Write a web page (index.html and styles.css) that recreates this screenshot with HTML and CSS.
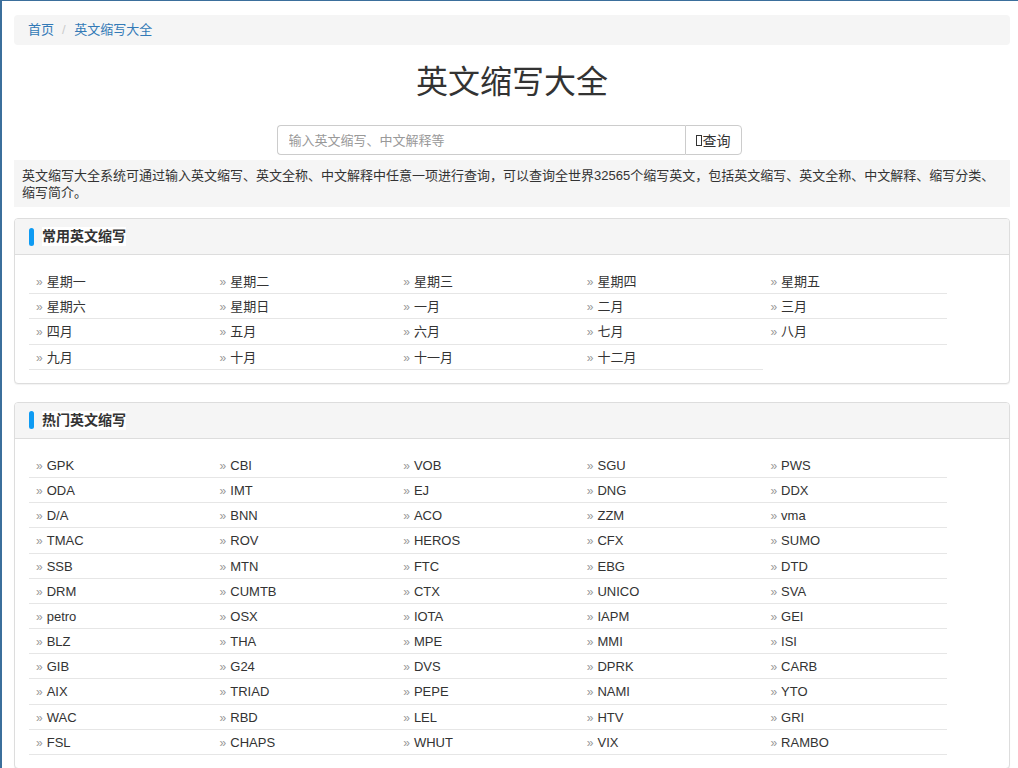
FILE: index.html
```html
<!DOCTYPE html>
<html lang="zh-CN">
<head>
<meta charset="utf-8">
<title>英文缩写大全</title>
<link rel="stylesheet" href="styles.css">
</head>
<body>
<div class="page">
  <ol class="breadcrumb">
    <li><a href="#">首页</a></li>
    <li><a href="#">英文缩写大全</a></li>
  </ol>
  <h1 class="title">英文缩写大全</h1>
  <form class="search">
    <input class="search-input" type="text" placeholder="输入英文缩写、中文解释等">
    <button class="search-btn" type="button"><span class="missing-glyph"></span>查询</button>
  </form>
  <div class="intro">英文缩写大全系统可通过输入英文缩写、英文全称、中文解释中任意一项进行查询，可以查询全世界32565个缩写英文，包括英文缩写、英文全称、中文解释、缩写分类、缩写简介。</div>

  <div class="panel">
    <div class="panel-heading"><span class="panel-title">常用英文缩写</span></div>
    <div class="panel-body">
      <ul class="list">
        <li><a href="#">星期一</a></li><li><a href="#">星期二</a></li><li><a href="#">星期三</a></li><li><a href="#">星期四</a></li><li><a href="#">星期五</a></li>
        <li><a href="#">星期六</a></li><li><a href="#">星期日</a></li><li><a href="#">一月</a></li><li><a href="#">二月</a></li><li><a href="#">三月</a></li>
        <li><a href="#">四月</a></li><li><a href="#">五月</a></li><li><a href="#">六月</a></li><li><a href="#">七月</a></li><li><a href="#">八月</a></li>
        <li><a href="#">九月</a></li><li><a href="#">十月</a></li><li><a href="#">十一月</a></li><li><a href="#">十二月</a></li>
      </ul>
    </div>
  </div>

  <div class="panel">
    <div class="panel-heading"><span class="panel-title">热门英文缩写</span></div>
    <div class="panel-body">
      <ul class="list list-en">
        <li><a href="#">GPK</a></li><li><a href="#">CBI</a></li><li><a href="#">VOB</a></li><li><a href="#">SGU</a></li><li><a href="#">PWS</a></li>
        <li><a href="#">ODA</a></li><li><a href="#">IMT</a></li><li><a href="#">EJ</a></li><li><a href="#">DNG</a></li><li><a href="#">DDX</a></li>
        <li><a href="#">D/A</a></li><li><a href="#">BNN</a></li><li><a href="#">ACO</a></li><li><a href="#">ZZM</a></li><li><a href="#">vma</a></li>
        <li><a href="#">TMAC</a></li><li><a href="#">ROV</a></li><li><a href="#">HEROS</a></li><li><a href="#">CFX</a></li><li><a href="#">SUMO</a></li>
        <li><a href="#">SSB</a></li><li><a href="#">MTN</a></li><li><a href="#">FTC</a></li><li><a href="#">EBG</a></li><li><a href="#">DTD</a></li>
        <li><a href="#">DRM</a></li><li><a href="#">CUMTB</a></li><li><a href="#">CTX</a></li><li><a href="#">UNICO</a></li><li><a href="#">SVA</a></li>
        <li><a href="#">petro</a></li><li><a href="#">OSX</a></li><li><a href="#">IOTA</a></li><li><a href="#">IAPM</a></li><li><a href="#">GEI</a></li>
        <li><a href="#">BLZ</a></li><li><a href="#">THA</a></li><li><a href="#">MPE</a></li><li><a href="#">MMI</a></li><li><a href="#">ISI</a></li>
        <li><a href="#">GIB</a></li><li><a href="#">G24</a></li><li><a href="#">DVS</a></li><li><a href="#">DPRK</a></li><li><a href="#">CARB</a></li>
        <li><a href="#">AIX</a></li><li><a href="#">TRIAD</a></li><li><a href="#">PEPE</a></li><li><a href="#">NAMI</a></li><li><a href="#">YTO</a></li>
        <li><a href="#">WAC</a></li><li><a href="#">RBD</a></li><li><a href="#">LEL</a></li><li><a href="#">HTV</a></li><li><a href="#">GRI</a></li>
        <li><a href="#">FSL</a></li><li><a href="#">CHAPS</a></li><li><a href="#">WHUT</a></li><li><a href="#">VIX</a></li><li><a href="#">RAMBO</a></li>
      </ul>
    </div>
  </div>
</div>
</body>
</html>
```

FILE: styles.css
```css
* { box-sizing: border-box; }

html, body {
  margin: 0;
  padding: 0;
}

body {
  font-family: "Liberation Sans", "Noto Sans CJK SC", sans-serif;
  font-size: 13px;
  color: #333;
  background: #fff;
  border-top: 1px solid #3b6f9c;
  border-left: 2px solid #3b6f9c;
  min-height: 100vh;
}

a { text-decoration: none; }

.page {
  width: 996px;
  margin-left: 12px;
  padding-top: 14px;
  padding-bottom: 20px;
}

/* breadcrumb */
.breadcrumb {
  list-style: none;
  margin: 0;
  padding: 0 14px;
  height: 30px;
  display: flex;
  align-items: center;
  background: #f5f5f5;
  border-radius: 4px;
  font-size: 13px;
  line-height: 18px;
}
.breadcrumb a { color: #337ab7; }
.breadcrumb li + li::before {
  content: "/\00a0";
  padding: 0 5px 0 8px;
  color: #ccc;
}

/* title */
.title {
  margin: 20px 0 25px;
  text-align: center;
  font-size: 32px;
  line-height: 35px;
  font-weight: normal;
  color: #333;
}

/* search */
.search {
  display: flex;
  justify-content: center;
  margin: 0;
  padding-right: 6px;
}
.search-input {
  width: 408px;
  height: 30px;
  margin: 0;
  padding: 0 11px;
  border: 1px solid #ccc;
  border-right: none;
  border-radius: 4px 0 0 4px;
  font-family: "Liberation Sans", "Noto Sans CJK SC", sans-serif;
  font-size: 13px;
  color: #555;
  outline: none;
}
.search-input::placeholder { color: #999; }
.search-btn {
  width: 57px;
  height: 30px;
  margin: 0;
  padding: 0;
  border: 1px solid #ccc;
  border-radius: 0 4px 4px 0;
  background: #fff;
  font-family: "Liberation Sans", "Noto Sans CJK SC", sans-serif;
  font-size: 14px;
  color: #333;
  display: flex;
  align-items: center;
  justify-content: center;
}
.missing-glyph {
  display: inline-block;
  width: 6px;
  height: 11px;
  border: 1px solid #333;
  margin-right: 1px;
}

/* intro */
.intro {
  margin-top: 5px;
  background: #f5f5f5;
  padding: 7px 8px 6px;
  font-size: 13px;
  line-height: 17px;
  color: #333;
}

/* panels */
.panel {
  margin-top: 11px;
  border: 1px solid #ddd;
  border-radius: 4px;
  background: #fff;
  box-shadow: 0 1px 1px rgba(0,0,0,0.05);
}
.panel + .panel { margin-top: 18px; }

.panel-heading {
  height: 36px;
  padding: 0 14px;
  background: #f5f5f5;
  border-bottom: 1px solid #ddd;
  border-radius: 3px 3px 0 0;
  display: flex;
  align-items: center;
}
.panel-heading::before {
  content: "";
  width: 5px;
  height: 18px;
  border-radius: 3px;
  background: #0e9bf3;
  margin-right: 8px;
}
.panel-title {
  background: #fff;
  font-size: 14px;
  font-weight: bold;
  line-height: 19px;
  color: #333;
}

.panel-body {
  padding: 14px 14px 13px;
}

.list {
  list-style: none;
  margin: 0;
  padding: 0;
  width: 918px;
  display: grid;
  grid-template-columns: repeat(5, 1fr);
}
.list li {
  height: 25.2px;
  line-height: 24px;
  padding-top: 1px;
  border-bottom: 1px solid #e6e6e6;
  padding-left: 7px;
  white-space: nowrap;
}
.list li::before {
  content: "»";
  color: #999;
  font-size: 12px;
  margin-right: 4px;
}
.list a {
  color: #333;
  font-size: 13px;
}
```
